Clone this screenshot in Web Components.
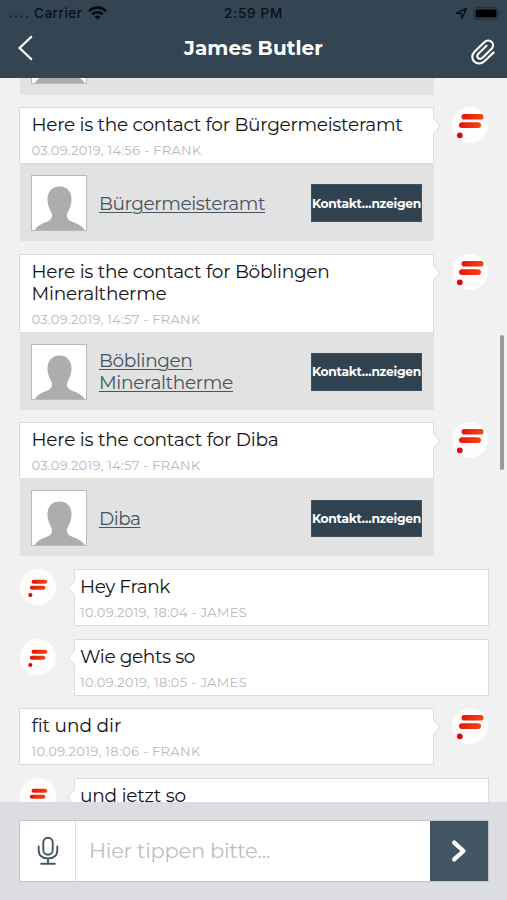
<!DOCTYPE html>
<html lang="de"><head><meta charset="utf-8"><title>James Butler</title>
<style>
html,body{margin:0;height:100%;background:#f1f1f1}
body{font-family:Montserrat,Inter,"Liberation Sans",sans-serif;overflow:hidden}
</style></head><body>
<chat-app></chat-app>
<script>
const define=(name,html,setup)=>customElements.define(name,class extends HTMLElement{
  constructor(){super();const t=document.createElement('template');t.innerHTML=html;
    this.attachShadow({mode:'open'}).append(t.content.cloneNode(true));}
  connectedCallback(){if(setup)setup(this,this.shadowRoot);}
});

/* A single line of text tracked to a given width. */
define('tracked-text',`<style>:host{display:block;white-space:nowrap}span{display:inline-block;text-decoration:var(--line,none);text-decoration-thickness:1.3px;text-underline-offset:2px}</style><span></span>`,(el,root)=>{
  root.querySelector('span').textContent=el.getAttribute('text');
});

define('status-bar',`<style>
:host{display:grid;grid-template-columns:1fr auto 1fr;align-items:center;height:26px;color:#0a0f14;font:500 13.5px Inter,sans-serif}
.l{display:flex;align-items:center;padding-left:9px}.r{display:flex;justify-content:flex-end;align-items:center;padding-right:5px;gap:5px}
svg{display:block}.l tracked-text{margin:0 5px 0 4px}
</style>
<div class="l"><svg width="21" height="12" fill="#1d2b36"><circle cx="1.5" cy="9.5" r="1.2"/><circle cx="7" cy="9.5" r="1.2"/><circle cx="12.5" cy="9.5" r="1.2"/><circle cx="18" cy="9.5" r="1.2"/></svg>
<tracked-text text="Carrier" w="48.5"></tracked-text>
<svg width="19" height="14" viewBox="0 0 19 14" fill="none" stroke="#05080b" stroke-width="2.7"><path d="M1 5.2C5.7.5 13.3.5 18 5.2M4.1 8.4c3-2.9 7.8-2.9 10.8 0"/><path d="M9.5 13.5l-3-3c1.7-1.5 4.3-1.5 6 0z" fill="#05080b" stroke="none"/></svg></div>
<tracked-text text="2:59 PM" w="59"></tracked-text>
<div class="r"><svg width="13" height="13" viewBox="0 0 13 13" fill="none" stroke="#0a0f14" stroke-width="1.4" stroke-linejoin="round"><path d="M1.5 6.2l10-4.7-4.6 10-.4-4.9z"/></svg>
<svg width="29" height="13" viewBox="0 0 29 13"><rect x=".8" y=".7" width="24.4" height="11.6" rx="3.2" fill="none" stroke="#20303d"/><rect x="2.5" y="2.4" width="21" height="8.2" rx="1.5" fill="#000"/><path d="M26.6 4.2q2 2.2 0 4.4z" fill="#20303d"/></svg></div>`);

define('app-header',`<style>
:host{display:block;height:78px;background:#334553;color:#fff;flex:none;position:relative;z-index:1}
.n{display:grid;grid-template-columns:1fr auto 1fr;height:43px;align-items:center}
tracked-text{font-size:20px;font-weight:700}
.b{margin-left:17px}.c{justify-self:end;margin:9px 11px 0 0}svg{display:block}
</style><status-bar></status-bar><div class="n">
<svg class="b" width="18" height="26" viewBox="0 0 18 26" fill="none" stroke="#fff" stroke-width="2.2"><path d="M14.8 1.4L2.6 13l12.2 11.6"/></svg>
<tracked-text text="James Butler" w="139"></tracked-text>
<svg class="c" width="26" height="26" viewBox="0 0 26 26" fill="none" stroke="#fff" stroke-width="2.1" stroke-linecap="round" stroke-linejoin="round"><path d="M23.6 13.4l-8.9 8.7c-3.5 3.4-7.9 3-10.5.4s-2.7-6.7.5-9.9l9.6-9.4c2.5-2.5 5.600-2 7.400-.2s2 4.700-.3 7l-8.900 8.800c-1.500 1.400-3.300 1.200-4.400.1s-1.100-2.800.3-4.200l8.100-8"/></svg></div>`);

define('brand-avatar',`<style>:host{display:block;width:36px;height:36px;flex:none}svg{display:block}</style>
<svg width="36" height="36" viewBox="0 0 36 36"><defs><linearGradient id="g"><stop stop-color="#e3140c"/><stop offset="1" stop-color="#f54412"/></linearGradient></defs><circle cx="18" cy="18" r="18" fill="#fefdfc"/><g class="m"><rect x="9.5" y="7" width="22" height="5.6" rx="2.8" fill="url(#g)"/><rect x="7" y="15.2" width="22" height="5.8" rx="2.9" fill="url(#g)"/><circle cx="7.8" cy="28.3" r="2.9" fill="#d8090c"/></g></svg>`,
(el,r)=>{if(el.hasAttribute('small'))r.querySelector('.m').setAttribute('transform','translate(4.8 5.9) scale(.71)');});

define('person-thumb',`<style>:host{display:block;box-sizing:border-box;width:56px;height:56px;border:1px solid #b9b9b9;background:#fff;flex:none}svg{display:block}</style>
<svg width="54" height="54" viewBox="0 0 54 54"><path d="M27.500 10.5c8 0 12.400 5.700 12 14-.3 5.500-2.400 9-4.200 12.700-.8 3.200 0 6 3.200 7.700 4.300 2.200 10.800 3.100 14 9.100H3c3-6 9.200-6.900 13.500-9.100 3.200-1.700 4-4.500 3.200-7.700C17.800 33.500 15.800 30 15.500 24.500c-.4-8.300 4-14 12-14z" fill="#adadad"/></svg>`);

define('contact-card',`<style>
:host{display:flex;box-sizing:border-box;height:77px;padding:1px 12px 0 11px;align-items:center;background:#e2e2e2;margin-left:1px;color:#455561}
.n{flex:1;margin-left:12px;padding-top:1px;font-size:18.5px;line-height:22px}
.n ::slotted(tracked-text){--line:underline}
button{box-sizing:border-box;width:110.5px;height:37.5px;border:1px solid #41515e;padding:0;background:#30424f;color:#fff;font:700 12.3px Montserrat,Inter,sans-serif;display:grid;place-items:center}
</style><person-thumb></person-thumb><div class="n"><slot></slot></div><button><tracked-text text="Kontakt…nzeigen" w="109"></tracked-text></button>`);

define('chat-message',`<style>
:host{display:flex;justify-content:space-between;align-items:flex-start;padding:0 19px}
:host([side=in]){flex-direction:row-reverse;padding:0 18.5px 0 20px}
.col{width:414.5px}.b{box-sizing:border-box;position:relative;background:#fff;border:1px solid #dcdcdc;padding:6px 11px 5px 11.5px}
:host([side=in]) .b{padding-left:5px}
.t{font-size:18.5px;line-height:22px;color:#141414}.m{font-size:13px;line-height:16px;margin-top:6px;color:#b9b9b9}
.tail{position:absolute;right:-8px;top:10px;display:block}:host([side=in]) .tail{right:auto;left:-8px;transform:scaleX(-1)}
</style><div class="col"><div class="b"><svg class="tail" width="9" height="16" viewBox="0 0 9 16"><path d="M0 1h1.500L8 8l-6.500 7H0z" fill="#fff"/><path d="M1.500 1L8 8l-6.500 7" fill="none" stroke="#dcdcdc"/></svg><div class="t"><slot></slot></div><div class="m"><slot name="meta"></slot></div></div><slot name="card"></slot></div><brand-avatar></brand-avatar>`,
(el,r)=>{if(el.getAttribute('side')==='in'){const a=document.createElement('brand-avatar');a.setAttribute('small','');r.querySelector('brand-avatar').replaceWith(a);}});

define('message-bar',`<style>
:host{display:block;box-sizing:border-box;height:98px;flex:none;background:#dcdde3;padding:18px 18.500px 0 19px;position:relative;z-index:1}
.f{display:flex;box-sizing:border-box;height:62px;border:1.500px solid #c3c4ca;background:#fff}
.m{width:55px;border-right:1px solid #dddde1;display:grid;place-items:center}
.p{flex:1;display:flex;align-items:center;padding-left:13px;color:#bebec0;font-size:21px;padding-bottom:2px}
.s{width:58px;background:#425562;display:grid;place-items:center}svg{display:block}
</style><div class="f"><div class="m"><svg width="22" height="30" viewBox="0 0 22 30" fill="none" stroke="#40565f" stroke-width="1.900" stroke-linecap="round"><rect x="6.300" y="1.800" width="9.400" height="17" rx="4.700"/><path d="M1.700 10.500v4.200c0 4.900 4.200 7.700 9.300 7.700s9.300-2.800 9.300-7.700v-4.200M11 22.800v4.300M4.200 27.700h13.600"/></svg></div>
<div class="p"><tracked-text text="Hier tippen bitte..." w="181"></tracked-text></div>
<div class="s"><svg width="16" height="24" viewBox="0 0 16 24" fill="none" stroke="#fff" stroke-width="4.300" stroke-linecap="round" stroke-linejoin="round"><path d="M3.200 3.600l9.300 8.400-9.300 8.400"/></svg></div></div>`);

define('chat-feed',`<style>
:host{display:flex;flex-direction:column;gap:12.600px;flex:1;min-height:0;overflow:hidden;background:#f1f1f1;position:relative}
.prev{box-sizing:border-box;height:16.600px;flex:none;display:flex;align-items:flex-end;overflow:hidden;width:413.500px;margin-left:20px;padding:0 0 10.600px 11px;background:#e2e2e2;overflow:clip}
.bar{position:absolute;right:3px;top:257px;width:4px;height:135px;border-radius:2px;background:#999}
chat-message{flex:none}
</style><div class="prev"><person-thumb></person-thumb></div>
<chat-message><tracked-text text="Here is the contact for Bürgermeisteramt" w="371"></tracked-text><tracked-text slot="meta" text="03.09.2019, 14:56 - FRANK" w="170"></tracked-text><contact-card slot="card"><tracked-text text="Bürgermeisteramt" w="166"></tracked-text></contact-card></chat-message>
<chat-message><tracked-text text="Here is the contact for Böblingen" w="298"></tracked-text><tracked-text text="Mineraltherme" w="135"></tracked-text><tracked-text slot="meta" text="03.09.2019, 14:57 - FRANK" w="169"></tracked-text><contact-card slot="card"><tracked-text text="Böblingen" w="93.500"></tracked-text><tracked-text text="Mineraltherme" w="134"></tracked-text></contact-card></chat-message>
<chat-message><tracked-text text="Here is the contact for Diba" w="247"></tracked-text><tracked-text slot="meta" text="03.09.2019, 14:57 - FRANK" w="169"></tracked-text><contact-card slot="card"><tracked-text text="Diba" w="41.500"></tracked-text></contact-card></chat-message>
<chat-message side="in"><tracked-text text="Hey Frank" w="90"></tracked-text><tracked-text slot="meta" text="10.09.2019, 18:04 - JAMES" w="167"></tracked-text></chat-message>
<chat-message side="in"><tracked-text text="Wie gehts so" w="115"></tracked-text><tracked-text slot="meta" text="10.09.2019, 18:05 - JAMES" w="167"></tracked-text></chat-message>
<chat-message><tracked-text text="fit und dir" w="90"></tracked-text><tracked-text slot="meta" text="10.09.2019, 18:06 - FRANK" w="169"></tracked-text></chat-message>
<chat-message side="in"><tracked-text text="und jetzt so" w="106"></tracked-text></chat-message>
<div class="bar"></div>`);

define('chat-app',`<style>:host{display:flex;flex-direction:column;width:507px;height:900px;overflow:hidden}</style><app-header></app-header><chat-feed></chat-feed><message-bar></message-bar>`);

/* Track every line once all elements have their final fonts. */
(function walk(root){root.querySelectorAll('*').forEach(e=>{
  if(e.localName==='tracked-text'){const s=e.shadowRoot.querySelector('span');
    s.style.letterSpacing=((+e.getAttribute('w')-s.getBoundingClientRect().width)/s.textContent.length)+'px';}
  if(e.shadowRoot)walk(e.shadowRoot);});})(document);
</script></body></html>
